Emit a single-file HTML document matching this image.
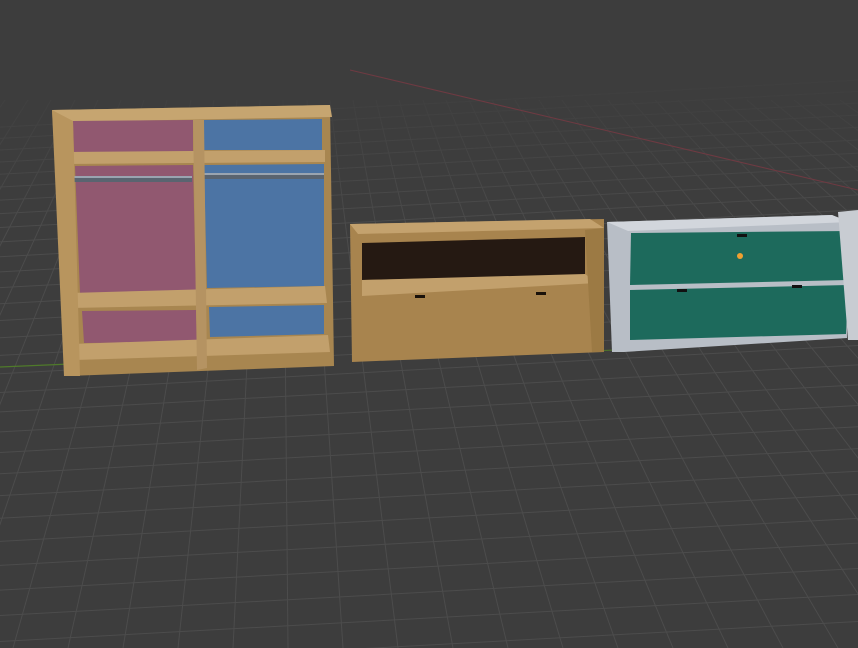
<!DOCTYPE html><html><head><style>html,body{margin:0;padding:0;background:#3d3d3d;overflow:hidden;width:858px;height:648px}svg{display:block}</style></head><body>
<svg width="858" height="648" viewBox="0 0 858 648" xmlns="http://www.w3.org/2000/svg">
<defs><linearGradient id="fade" x1="0" y1="0" x2="0" y2="1"><stop offset="0" stop-color="#3d3d3d" stop-opacity="1"/><stop offset="0.4" stop-color="#3d3d3d" stop-opacity="0.85"/><stop offset="1" stop-color="#3d3d3d" stop-opacity="0"/></linearGradient></defs>
<rect width="858" height="648" fill="#3d3d3d"/>
<path stroke="#4c4c4c" stroke-width="1" fill="none" d="
M-372 648L5 100M-317 648L28 100M-262 648L51 100M-207 648L75 100M-152 648L98 100M-97 648L121 100M-42 648L144 100M13 648L167 100M68 648L191 100M123 648L214 100
M178 648L237 100M233 648L260 100M288 648L283 100M343 648L307 100M398 648L330 100M453 648L353 100M508 648L376 100M563 648L399 100M618 648L423 100M673 648L446 100
M728 648L469 100M783 648L492 100M838 648L515 100M893 648L539 100M948 648L562 100M1003 648L585 100M1058 648L608 100M1113 648L631 100M1168 648L655 100M1223 648L678 100
M1278 648L701 100M1333 648L724 100M1388 648L747 100M1443 648L771 100M1498 648L794 100M1553 648L817 100M1608 648L840 100M1663 648L863 100
"/>
<path stroke="#4c4c4c" stroke-width="1" fill="none" d="
M0 668.5L858 621.5M0 641.5L858 594.5M0 615.5L858 568.5M0 590.1L858 543.1M0 565.4L858 518.4M0 541.4L858 494.4M0 518.2L858 471.2
M0 495.6L858 448.6M0 473.7L858 426.7M0 452.5L858 405.5M0 431.9L858 384.9M0 411.9L858 364.9M0 392.5L858 345.5M0 373.7L858 326.7
M0 355.4L858 308.4M0 337.7L858 290.7M0 320.5L858 273.5M0 303.8L858 256.8M0 287.6L858 240.6M0 271.9L858 224.9M0 256.7L858 209.7
M0 241.9L858 194.9M0 227.5L858 180.5M0 213.6L858 166.6M0 200.1L858 153.1M0 187L858 140M0 174.3L858 127.3M0 162L858 115
M0 150L858 103M0 138.4L858 91.4M0 127.1L858 80.1
"/>
<rect x="0" y="0" width="858" height="230" fill="url(#fade)"/>
<line x1="350" y1="70" x2="858" y2="190" stroke="#6e3a42" stroke-width="1"/>
<line x1="0" y1="367" x2="70" y2="364" stroke="#4f7a2a" stroke-width="1.2"/>
<line x1="590" y1="351" x2="615" y2="350" stroke="#4f7a2a" stroke-width="1"/>
<!-- wardrobe -->
<polygon points="52,110 330,105 334,366 68,376" fill="#a88650"/>
<polygon points="52,110 330,105 332,117 58,122" fill="#c6a570"/>
<polygon points="73,121 193,120 193,152 74,152" fill="#915870"/>
<polygon points="204,120 322,119 322,150 204,150" fill="#4c74a4"/>
<polygon points="64,152 325,150 325,162 64,164" fill="#c2a06c"/>
<polygon points="75,166 193,165 196,292 80,293" fill="#915870"/>
<polygon points="204,165 324,164 324,286 207,288" fill="#4c74a4"/>
<rect x="69" y="176" width="123" height="6" fill="#5a6470"/><rect x="69" y="176" width="123" height="2" fill="#9aa4b0"/>
<rect x="203" y="173" width="121" height="6" fill="#5a6470"/><rect x="203" y="173" width="121" height="2" fill="#9aa4b0"/>
<polygon points="70,293 325,286 327,303 70,308" fill="#c2a06c"/>
<polygon points="82,311 196,310 197,342 84,343" fill="#915870"/>
<polygon points="209,307 324,305 324,334 210,337" fill="#4c74a4"/>
<polygon points="72,344 328,335 330,352 75,360" fill="#c2a06c"/>
<polygon points="193,120 204,120 207,368 197,370" fill="#b59362"/>
<polygon points="52,110 73,121 80,376 64,376" fill="#b8955e"/>
<!-- tv unit -->
<polygon points="350,224 604,219 604,352 352,362" fill="#a8844e"/>
<polygon points="350,224 590,219 604,228 358,234" fill="#c4a26e"/>
<polygon points="362,243 585,237 585,275 362,280" fill="#251912"/>
<polygon points="362,280 585,274 597,283 362,296" fill="#c2a06c"/>
<polygon points="585,230 604,228 604,352 592,352" fill="#9c7a44"/>
<rect x="415" y="295" width="10" height="3" fill="#1a120a"/><rect x="536" y="292" width="10" height="3" fill="#1a120a"/>
<!-- dresser -->
<polygon points="607,222 832,215 846,222 847,338 624,352 612,352" fill="#b8bec6"/>
<polygon points="607,222 832,215 850,222 628,231" fill="#d2d6dc"/>
<polygon points="631,233 850,231 848,280 630,285" fill="#1d6a5c"/>
<polygon points="630,290 848,285 846,334 630,340" fill="#1d6a5c"/>
<rect x="737" y="234" width="10" height="3" fill="#111"/>
<rect x="677" y="289" width="10" height="3" fill="#111"/><rect x="792" y="285" width="10" height="3" fill="#111"/>
<circle cx="740" cy="256" r="3" fill="#f0a030"/>
<polygon points="838,212 858,210 858,340 848,340" fill="#c8ccd2"/>
</svg>
</body></html>
